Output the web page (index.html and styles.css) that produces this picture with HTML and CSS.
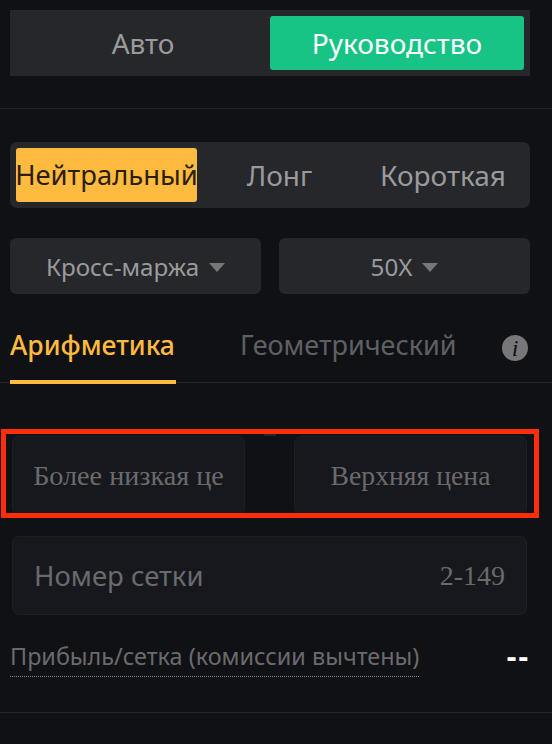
FILE: index.html
```html
<!DOCTYPE html>
<html lang="ru">
<head>
<meta charset="utf-8">
<title>Сетка</title>
<link rel="stylesheet" href="styles.css">
</head>
<body>
<section class="mode">
  <div class="seg seg-square">
    <div class="seg-item seg-half">Авто</div>
    <div class="seg-item seg-half green">Руководство</div>
  </div>
</section>
<div class="rule rule-top"></div>
<section class="direction">
  <div class="seg seg-round">
    <div class="seg-item dir-neutral yellow">Нейтральный</div>
    <div class="seg-item dir-long">Лонг</div>
    <div class="seg-item dir-short">Короткая</div>
  </div>
</section>
<section class="selects">
  <div class="select">Кросс-маржа<i class="caret"></i></div>
  <div class="select">50X<i class="caret"></i></div>
</section>
<section class="tabs">
  <div class="tab active">Арифметика</div>
  <div class="tab">Геометрический</div>
  <span class="info">i</span>
</section>
<section class="form">
  <div class="range">
    <div class="field field-range">Более низкая це</div>
    <div class="field field-range field-upper">Верхняя цена</div>
    <i class="range-dash"></i>
    <div class="highlight"></div>
  </div>
  <div class="field field-grid">
    <span class="grid-label">Номер сетки</span>
    <span class="grid-hint">2-149</span>
  </div>
  <div class="profit">
    <span class="profit-label">Прибыль/сетка (комиссии вычтены)</span>
    <span class="profit-value">--</span>
  </div>
</section>
<div class="rule rule-bottom"></div>
</body>
</html>
```
FILE: styles.css
```css
* { box-sizing: border-box; }
html, body { margin: 0; height: 100%; overflow: hidden; }
body {
  width: 552px;
  height: 744px;
  padding-top: 10px;
  background: #101115;
  font-family: "Noto Sans", "Liberation Sans", sans-serif;
  color: #9a9a9d;
}
.mode, .direction, .selects { padding: 0 22px 0 10px; }
.seg {
  display: flex;
  align-items: stretch;
  height: 66px;
  padding: 6px;
  background: #26272a;
  font-size: 28px;
  line-height: 52px;
}
.seg-square { gap: 0; }
.seg-round { border-radius: 7px; }
.seg-item {
  display: flex;
  align-items: center;
  justify-content: center;
  border-radius: 3px;
  white-space: nowrap;
}
.seg-half { flex: 1 1 0; }
.green { background: #17c486; color: #fff; }
.yellow { background: #ffbb3f; color: #2b1e05; font-size: 27.4px; }
.dir-neutral { width: 181px; }
.dir-long { width: 165px; }
.dir-short { width: 162px; }
.rule { height: 1px; background: #26272a; }
.rule-top { margin-top: 32px; }
.direction { margin-top: 33px; }
.selects {
  display: flex;
  gap: 18px;
  margin-top: 30px;
}
.select {
  flex: 1 1 0;
  height: 56px;
  display: flex;
  align-items: center;
  justify-content: center;
  gap: 10px;
  border-radius: 6px;
  background: #26272a;
  font-size: 24.2px;
}
.caret {
  width: 0;
  height: 0;
  margin-top: 3px;
  border-left: 8px solid transparent;
  border-right: 8px solid transparent;
  border-top: 9px solid #77777a;
}
.tabs {
  display: flex;
  align-items: flex-start;
  height: 90px;
  padding: 32px 0 0 10px;
  background: linear-gradient(#26272a, #26272a) 0 88px / 100% 1px no-repeat;
  font-size: 27px;
}
.tab {
  color: #5f6064;
  height: 58px;
  white-space: nowrap;
  line-height: 38px;
}
.tab.active {
  width: 166px;
  margin-right: 64px;
  color: #ffbb3f;
  border-bottom: 4px solid #ffbb3f;
  font-size: 26.5px;
  font-weight: 500;
}
.info {
  width: 26px;
  height: 26px;
  margin-left: auto;
  margin-right: 24px;
  margin-top: 9px;
  border-radius: 50%;
  background: #77777a;
  color: #101115;
  font: italic 400 24px/26px "Liberation Serif", serif;
  text-align: center;
}
.form { padding: 52px 25px 0 12px; }
.range {
  position: relative;
  display: flex;
  justify-content: space-between;
}
.field {
  height: 79px;
  display: flex;
  align-items: center;
  border: 1px solid #1e1f24;
  border-radius: 7px;
  background: #17181d;
  font-size: 27.5px;
  color: #6a6a6d;
}
.field-range {
  width: 233px;
  justify-content: center;
  font-family: "Liberation Serif", serif;
  font-size: 28.2px;
}
.field-upper { font-size: 27.7px; }
.range-dash {
  position: absolute;
  left: 252px;
  top: -2px;
  width: 12px;
  height: 2px;
  background: #26272a;
}
.highlight {
  position: absolute;
  left: -11px;
  top: -7px;
  width: 538px;
  height: 89px;
  border: 5px solid #ff2d0a;
}
.field-grid {
  margin-top: 21px;
  justify-content: space-between;
  padding: 0 21px;
}
.grid-hint { font-family: "Liberation Serif", serif; font-size: 28px; }
.profit {
  display: flex;
  justify-content: space-between;
  align-items: flex-start;
  margin: 26px -3px 0 -2px;
  font-size: 23.4px;
}
.profit-label {
  height: 36px;
  line-height: 30px;
  color: #6a6a6d;
  border-bottom: 1px dotted #8a8a8c;
  white-space: nowrap;
}
.profit-value {
  color: #fff;
  line-height: 30px;
  font-size: 30px;
  font-weight: 700;
  letter-spacing: 2px;
}
.rule-bottom { margin-top: 35px; }
```
